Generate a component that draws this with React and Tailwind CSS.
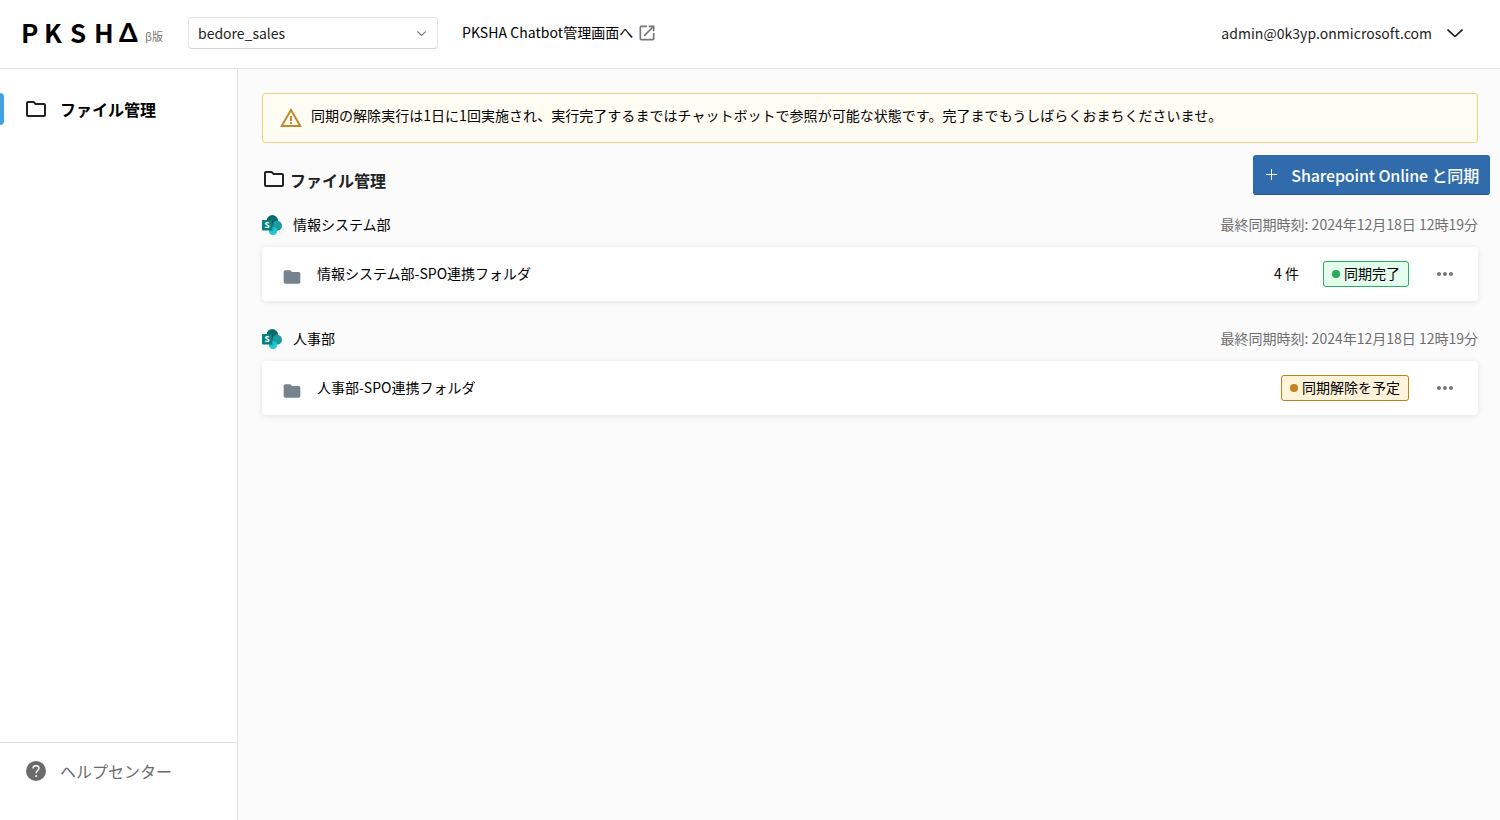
import {
    MdFolder,
    MdMoreHoriz,
    MdOpenInNew,
    MdOutlineFolder,
    MdWarningAmber,
} from "react-icons/md";

const GROUPS = [
    {
        name: "情報システム部",
        syncedAt: "2024年12月18日 12時19分",
        folder: "情報システム部-SPO連携フォルダ",
        count: 4,
        status: "done",
    },
    {
        name: "人事部",
        syncedAt: "2024年12月18日 12時19分",
        folder: "人事部-SPO連携フォルダ",
        count: null,
        status: "releasing",
    },
];

const STATUSES = {
    done: {
        label: "同期完了",
        badge: "border-[#27ae60] bg-[#e3fcec]",
        dot: "bg-[#27ab5a]",
    },
    releasing: {
        label: "同期解除を予定",
        badge: "border-[#c27f1c] bg-[#fff3d9]",
        dot: "bg-[#c4831f]",
    },
};

function Chevron({ className, strokeWidth }) {
    return (
        <svg viewBox="0 0 16 8" fill="none" stroke="currentColor" strokeWidth={strokeWidth} className={className}>
            <path d="M0.5 0.5L8 7.5L15.5 0.5" />
        </svg>
    );
}

function Logo() {
    return (
        <div className="flex h-8 items-center pb-[5px] text-[26px] leading-8 font-bold text-black">
            <span className="w-[23px]">P</span>
            <span className="w-[26px]">K</span>
            <span className="w-6">S</span>
            <span className="w-[25px]">H</span>
            <span className="w-5 font-['Lato'] text-[26.5px] font-black">Δ</span>
        </div>
    );
}

function SharepointIcon() {
    return (
        <svg viewBox="0 0 20 20" className="h-5 w-5 shrink-0">
            <circle cx="10.3" cy="5.7" r="5.7" fill="#036c70" />
            <circle cx="15" cy="10.8" r="5" fill="#1a9ba1" />
            <circle cx="11" cy="16" r="4" fill="#20c8d2" />
            <path d="M5 5h5.4a.8.8 0 0 1 .8.8v10.4H7.1A4 4 0 0 1 7 15H5z" fill="#000" opacity="0.2" />
            <rect y="5" width="10" height="10.5" rx="0.8" fill="#06827f" />
            <text x="5" y="13.4" textAnchor="middle" fontSize="9.5" fontWeight="700" fontFamily="Open Sans, sans-serif" fill="#fff">
                S
            </text>
        </svg>
    );
}

function HelpIcon() {
    return (
        <svg viewBox="0 0 24 24" className="h-6 w-6">
            <circle cx="12" cy="12" r="10" fill="currentColor" />
            <path
                d="M9 9.4C9 7.7 10.2 6.7 12 6.7s3 1 3 2.6c0 2.1-2.9 2.4-2.9 4.9"
                fill="none"
                stroke="#fff"
                strokeWidth="1.4"
            />
            <circle cx="12.1" cy="16.9" r="1" fill="#fff" />
        </svg>
    );
}

function Header() {
    return (
        <header className="flex h-[69px] shrink-0 items-center border-b border-[#dfe4e7] bg-white pr-[37px] pl-[21px]">
            <Logo />
            <span className="mt-1.5 ml-1.5 w-[18px] text-[11px] whitespace-nowrap text-[#777]">β版</span>
            <button
                type="button"
                className="mt-[-3px] ml-[25px] flex h-8 w-[250px] items-center justify-between rounded border border-[#e5e5e5] border-b-[#d2d2d2] pr-[11px] pl-[9px] text-[#222]"
            >
                <span>bedore_sales</span>
                <Chevron strokeWidth={2} className="mt-px h-[5px] w-[9px] text-[#777]" />
            </button>
            <a href="#" className="mt-[-3px] ml-6 flex items-center gap-1 text-black">
                <span className="-mt-0.5 tracking-[0.05px]">PKSHA Chatbot管理画面へ</span>
                <MdOpenInNew size={20} className="text-[#777]" />
            </a>
            <button type="button" className="ml-auto flex items-center gap-[15px] text-[#222]">
                <span className="-mt-0.5 tracking-[0.04px]">admin@0k3yp.onmicrosoft.com</span>
                <Chevron strokeWidth={1.7} className="-mt-0.5 h-2 w-4" />
            </button>
        </header>
    );
}

function Sidebar() {
    return (
        <aside className="flex w-[238px] shrink-0 flex-col border-r border-[#dfe4e7] bg-white">
            <a href="#" className="mt-6 flex h-8 items-center text-base font-bold text-black">
                <span className="h-8 w-1 rounded-r-sm bg-[#40a2e3]" />
                <MdOutlineFolder size={24} className="ml-5 text-[#222]" />
                <span className="ml-3">ファイル管理</span>
            </a>
            <a
                href="#"
                className="mt-auto flex h-[78px] items-start border-t border-[#dfe4e7] pt-4 pl-6 text-base leading-6 text-[#6b6b6b]"
            >
                <HelpIcon />
                <span className="ml-3">ヘルプセンター</span>
            </a>
        </aside>
    );
}

function StatusBadge({ status }) {
    const { label, badge, dot } = STATUSES[status];
    return (
        <span className={`flex h-[26px] items-center gap-1 rounded-[3px] border px-2 text-black ${badge}`}>
            <span className={`h-2 w-2 rounded-full ${dot}`} />
            <span className="-mt-0.5">{label}</span>
        </span>
    );
}

function FolderGroup({ group }) {
    return (
        <section className="mb-[26px]">
            <div className="flex h-6 items-center">
                <SharepointIcon />
                <h2 className="-mt-0.5 ml-[11px] text-black">{group.name}</h2>
                <span className="-mt-0.5 ml-auto text-[#6f6f6f]">最終同期時刻: {group.syncedAt}</span>
            </div>
            <div className="mt-2.5 flex h-[54px] items-center rounded bg-white pr-[21px] pl-5 text-black shadow-[0_1px_6px_rgba(0,0,0,0.1)]">
                <MdFolder size={20} className="mt-1.5 text-[#75838d]" />
                <span className="-mt-0.5 ml-[15px]">{group.folder}</span>
                <div className="ml-auto flex items-center gap-6">
                    {group.count !== null && <span className="-mt-0.5">{group.count} 件</span>}
                    <StatusBadge status={group.status} />
                    <MdMoreHoriz size={24} className="text-[#777]" />
                </div>
            </div>
        </section>
    );
}

export default function App() {
    return (
        <div className="flex h-screen flex-col overflow-hidden bg-[#fbfbfb] font-['Noto_Sans_CJK_JP',sans-serif] text-sm">
            <Header />
            <div className="flex min-h-0 flex-1">
                <Sidebar />
                <main className="min-w-0 flex-1 pt-6 pr-[22px] pl-6">
                    <div className="flex h-[50px] items-start rounded-[3px] border border-[#f1d27c] bg-[#fffcf3] pt-3 pl-4 text-black">
                        <MdWarningAmber size={24} className="text-[#c4892b]" />
                        <p className="-mt-px ml-2 tracking-[0.03px]">
                            同期の解除実行は1日に1回実施され、実行完了するまではチャットボットで参照が可能な状態です。完了までもうしばらくおまちくださいませ。
                        </p>
                    </div>

                    <div className="mt-3 -mr-3 mb-[18px] flex h-10 items-center justify-between">
                        <h1 className="mt-2.5 flex items-center gap-1 text-base font-bold text-[#222]">
                            <MdOutlineFolder size={24} className="-mt-0.5" />
                            ファイル管理
                        </h1>
                        <button
                            type="button"
                            className="flex h-10 items-center rounded-[3px] border border-[#2f68a6] border-b-[#27568a] bg-[#306cac] pr-2.5 pl-3 text-base font-medium text-white"
                        >
                            <svg viewBox="0 0 11 11" stroke="currentColor" className="-mt-0.5 h-[11px] w-[11px]">
                                <path d="M5.5 0v11M0 5.5h11" />
                            </svg>
                            <span className="ml-3.5 tracking-[-0.15px]">Sharepoint Online と同期</span>
                        </button>
                    </div>

                    {GROUPS.map((group) => (
                        <FolderGroup key={group.name} group={group} />
                    ))}
                </main>
            </div>
        </div>
    );
}
